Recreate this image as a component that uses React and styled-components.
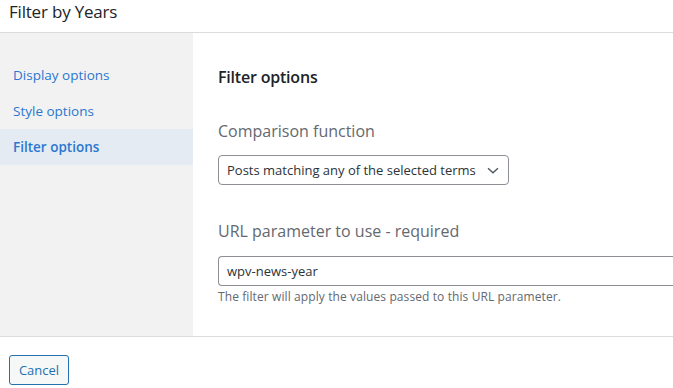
import React from 'react';
import styled, {createGlobalStyle} from 'styled-components';

const GlobalStyle = createGlobalStyle`
  html, body {
    margin: 0;
    padding: 0;
    background: #fff;
    font-family: 'Open Sans', 'Noto Sans', sans-serif;
    color: #1d2327;
    overflow: hidden;
  }
`;

const Modal = styled.div`
  width: 673px;
  height: 388px;
  display: flex;
  flex-direction: column;
  background: #fff;
`;

const Header = styled.div`
  height: 33px;
  border-bottom: 1px solid #dcdcde;
  display: flex;
  align-items: flex-start;
  padding-left: 9px;
  box-sizing: border-box;
`;

const Title = styled.h1`
  margin: 1px 0 0;
  font-size: 17px;
  line-height: 22px;
  font-weight: 400;
  color: #1d2327;
  letter-spacing: -0.2px;
`;

const Body = styled.div`
  display: flex;
  height: 303px;
  border-bottom: 1px solid #dcdcde;
`;

const Sidebar = styled.nav`
  width: 193px;
  flex-shrink: 0;
  background: #f2f2f2;
  padding-top: 24px;
  display: flex;
  flex-direction: column;
`;

const NavItem = styled.a`
  display: flex;
  align-items: center;
  height: 36px;
  padding-left: 13px;
  font-size: 13.5px;
  color: #2b77cf;
  font-weight: ${p => (p.active ? 600 : 400)};
  background: ${p => (p.active ? '#e5ebf3' : 'transparent')};
  text-decoration: none;
`;

const Main = styled.section`
  flex: 1;
  padding: 34px 0 0 25px;
  display: flex;
  flex-direction: column;
  min-width: 0;
`;

const Heading = styled.h2`
  margin: 0 0 33px;
  font-size: 16px;
  font-weight: 600;
  line-height: 20px;
  letter-spacing: -0.2px;
`;

const Label = styled.label`
  font-size: 16px;
  color: #646970;
  line-height: 22px;
  margin-bottom: ${p => p.gap || 13}px;
`;

const Select = styled.div`
  width: 291px;
  height: 30px;
  box-sizing: border-box;
  border: 1px solid #8c8f94;
  border-radius: 4px;
  display: flex;
  align-items: center;
  justify-content: space-between;
  padding: 0 6px 0 8px;
  font-size: 13px;
  color: #2c3338;
  margin-bottom: 35px;
`;

const Input = styled.div`
  height: 30px;
  box-sizing: border-box;
  border: 1px solid #8c8f94;
  border-right: none;
  border-radius: 4px 0 0 4px;
  display: flex;
  align-items: center;
  padding-left: 8px;
  font-size: 13px;
  color: #2c3338;
`;

const Help = styled.p`
  margin: 3px 0 0;
  font-size: 12px;
  line-height: 16px;
  color: #646970;
  letter-spacing: 0.1px;
`;

const Footer = styled.div`
  flex: 1;
  display: flex;
  align-items: flex-start;
  padding: 18px 0 0 9px;
`;

const Button = styled.button`
  height: 30px;
  width: 60px;
  border: 1px solid #2271b1;
  border-radius: 3px;
  background: #f6f7f7;
  color: #2271b1;
  font-family: inherit;
  font-size: 13px;
  padding: 0;
  cursor: pointer;
`;

const Chevron = () => (
  <svg width="18" height="18" viewBox="0 0 20 20" fill="none">
    <path d="M4.5 8l5.5 5 5.5-5" stroke="#50575e" strokeWidth="1.6" />
  </svg>
);

export default function App() {
  return (
    <>
      <GlobalStyle />
      <Modal>
        <Header>
          <Title>Filter by Years</Title>
        </Header>
        <Body>
          <Sidebar>
            <NavItem>Display options</NavItem>
            <NavItem>Style options</NavItem>
            <NavItem active>Filter options</NavItem>
          </Sidebar>
          <Main>
            <Heading>Filter options</Heading>
            <Label>Comparison function</Label>
            <Select>
              <span>Posts matching any of the selected terms</span>
              <Chevron />
            </Select>
            <Label gap={14}>URL parameter to use - required</Label>
            <Input>wpv-news-year</Input>
            <Help>The filter will apply the values passed to this URL parameter.</Help>
          </Main>
        </Body>
        <Footer>
          <Button>Cancel</Button>
        </Footer>
      </Modal>
    </>
  );
}
